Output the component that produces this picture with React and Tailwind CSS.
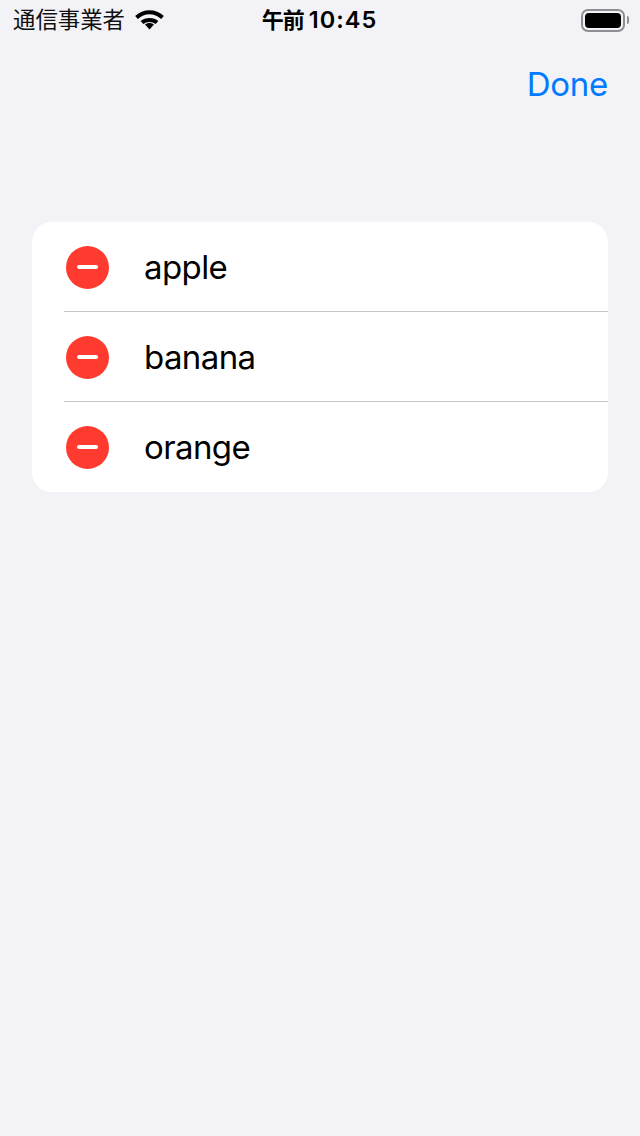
const items = ["apple", "banana", "orange"];

const Wifi = () => (
  <svg width="31" height="22" viewBox="0 0 30 22" fill="none" stroke="#000" strokeWidth="4">
    <path d="M2 8.5C9.5 1.5 20.5 1.5 28 8.5" />
    <path d="M7.5 13.5C11.5 10 18.5 10 22.5 13.5" />
    <path d="M10.5 15.5L15 20.5L19.5 15.5C17 13.5 13 13.5 10.5 15.5Z" fill="#000" stroke="none" />
  </svg>
);

const Battery = () => (
  <div className="flex items-center gap-[2px]">
    <div className="w-[44px] h-[23px] rounded-[7px] border-2 border-[#8e8e93] p-[2px]">
      <div className="w-full h-full rounded-[4px] bg-black" />
    </div>
    <div className="w-[2px] h-[8px] rounded-r-sm bg-[#8e8e93]" />
  </div>
);

const Row = ({ name, last }) => (
  <div className="flex h-[90px] pl-[32px]">
    <div className={"flex-1 flex items-center " + (last ? "" : "border-b border-[#c6c6c8]")}>
      <div className={"w-[43px] h-[43px] ml-[2px] rounded-full bg-[#ff3b30] flex items-center justify-center " + (last ? "" : "mt-[1px]")}>
        <div className="w-[21px] h-[3.5px] rounded-full bg-white" />
      </div>
      <div className={"ml-[35px] text-[33px] leading-[40px] tracking-[-0.6px] text-black " + (last ? "" : "mt-[1px]")}>{name}</div>
    </div>
  </div>
);

export default function App() {
  return (
    <div className="w-[640px] h-[1136px] bg-[#f2f2f7] font-['Inter','Noto_Sans_CJK_JP',sans-serif]">
      <div className="grid grid-cols-3 items-center h-[40px] pl-[13px] pr-[11px]">
        <div className="flex items-center gap-[9px]">
          <span className="text-[22.4px] leading-[30px] text-[#111] whitespace-nowrap">通信事業者</span>
          <Wifi />
        </div>
        <div className="flex justify-center items-center gap-[5px] pr-[3px] leading-[30px] font-semibold text-black whitespace-nowrap">
          <span className="text-[22px] tracking-[-1px]">午前</span>
          <span className="text-[23.5px] tracking-[1px]">10:45</span>
        </div>
        <div className="flex justify-end">
          <Battery />
        </div>
      </div>
      <div className="flex justify-end h-[88px] pr-[32px] pt-[24px]">
        <span className="text-[33px] leading-[40px] tracking-[-0.3px] text-[#007aff]">Done</span>
      </div>
      <div className="mx-[32px] mt-[94px] rounded-[20px] bg-white overflow-hidden">
        {items.map((name, i) => (
          <Row key={name} name={name} last={i === items.length - 1} />
        ))}
      </div>
    </div>
  );
}
